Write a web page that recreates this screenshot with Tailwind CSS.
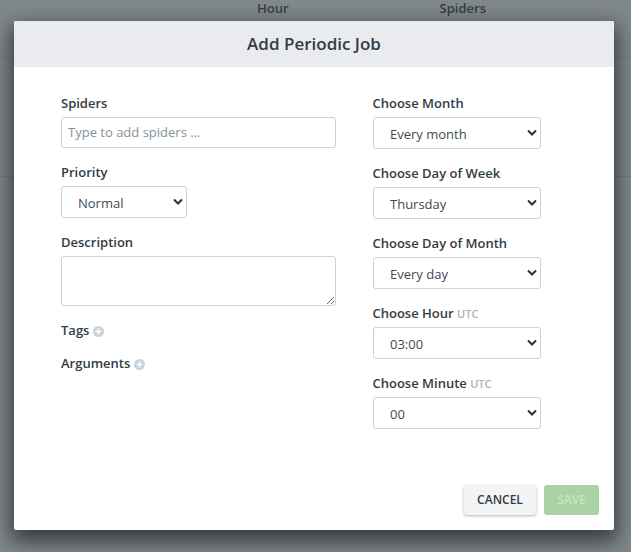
<!DOCTYPE html>
<html lang="en">
<head>
    <meta charset="UTF-8">
    <meta name="viewport" content="width=device-width, initial-scale=1.0">
    <title>Add Periodic Job</title>
    <script src="https://cdn.jsdelivr.net/npm/@tailwindcss/browser@4"></script>
</head>
<body class="relative h-[552px] w-[631px] overflow-hidden bg-[#81888c] font-['Open_Sans',sans-serif] text-[#323c44]">
    <!-- table behind the overlay -->
    <div class="h-[58px] border-b border-[#767d80] flex text-[13px] font-semibold text-[#363e43] leading-[16px]">
        <span class="ml-[257px]">Hour</span>
        <span class="ml-[151px]">Spiders</span>
    </div>
    <div class="h-[119px] border-b border-[#767d80]"></div>

    <!-- modal -->
    <div class="absolute left-[14px] top-[21px] w-[600px] h-[509px] flex flex-col bg-white rounded-[2px] overflow-hidden shadow-[0_8px_20px_4px_rgba(0,0,0,0.55)]">
        <div class="h-[46px] shrink-0 bg-[#eaebef] flex items-center justify-center text-[17px] font-semibold text-[#323c44]">Add Periodic Job</div>

        <div class="flex pl-[47px] pt-[26px]">
            <div class="w-[275px] flex flex-col gap-[14px]">
                <div>
                    <label class="block h-[20px] mb-[4px] text-[13px] font-semibold leading-[20px]">Spiders</label>
                    <input type="text" placeholder="Type to add spiders ..." class="block w-full h-[31px] px-[6px] pb-[1px] border border-[#cbd3d9] rounded-[3px] text-[13px] outline-none placeholder:text-[#84929c]">
                </div>
                <div>
                    <label class="block h-[20px] mb-[4px] text-[13px] font-semibold leading-[20px]">Priority</label>
                    <div class="relative w-[126px]">
                        <select class="block appearance-none w-full h-[32px] pl-[16px] pt-[3px] border border-[#cbd3d9] rounded-[3px] bg-white text-[13px] text-[#3f4a52] outline-none">
                            <option>Normal</option>
                        </select>
                        <svg class="absolute right-[4px] top-[12px] w-[10px] h-[8px]" viewBox="0 0 10 8" fill="none" stroke="#2b3238" stroke-width="2"><path d="M1 1.5 5 5.5 9 1.5"/></svg>
                    </div>
                </div>
                <div>
                    <label class="block h-[20px] mb-[4px] text-[13px] font-semibold leading-[20px]">Description</label>
                    <textarea class="block w-full h-[50px] border border-[#cbd3d9] rounded-[3px] outline-none"></textarea>
                </div>
                <div class="flex items-center h-[20px] mt-px text-[13px] font-semibold">
                    Tags
                    <svg class="ml-[4px] mt-[1px] w-[11px] h-[11px]" viewBox="0 0 11 11"><circle cx="5.5" cy="5.5" r="5.5" fill="#c9d3da"/><path d="M5.5 2.5v6M2.5 5.5h6" stroke="#fff" stroke-width="1.6"/></svg>
                </div>
                <div class="flex items-center h-[20px] -mt-px text-[13px] font-semibold">
                    Arguments
                    <svg class="ml-[4px] mt-[1px] w-[11px] h-[11px]" viewBox="0 0 11 11"><circle cx="5.5" cy="5.5" r="5.5" fill="#c9d3da"/><path d="M5.5 2.5v6M2.5 5.5h6" stroke="#fff" stroke-width="1.6"/></svg>
                </div>
            </div>

            <div class="ml-[36.5px] w-[168.5px] flex flex-col gap-[14px]">
                <div>
                    <label class="block h-[20px] mb-[4px] text-[13px] font-semibold leading-[20px]">Choose Month</label>
                    <div class="relative">
                        <select class="block appearance-none w-full h-[32px] pl-[16.5px] pt-[3px] border border-[#cbd3d9] rounded-[3px] bg-white text-[13px] text-[#3f4a52] outline-none">
                            <option>Every month</option>
                        </select>
                        <svg class="absolute right-[4px] top-[12px] w-[10px] h-[8px]" viewBox="0 0 10 8" fill="none" stroke="#2b3238" stroke-width="2"><path d="M1 1.5 5 5.5 9 1.5"/></svg>
                    </div>
                </div>
                <div>
                    <label class="block h-[20px] mb-[4px] text-[13px] font-semibold leading-[20px]">Choose Day of Week</label>
                    <div class="relative">
                        <select class="block appearance-none w-full h-[32px] pl-[16.5px] pt-[3px] border border-[#cbd3d9] rounded-[3px] bg-white text-[13px] text-[#3f4a52] outline-none">
                            <option>Thursday</option>
                        </select>
                        <svg class="absolute right-[4px] top-[12px] w-[10px] h-[8px]" viewBox="0 0 10 8" fill="none" stroke="#2b3238" stroke-width="2"><path d="M1 1.5 5 5.5 9 1.5"/></svg>
                    </div>
                </div>
                <div>
                    <label class="block h-[20px] mb-[4px] text-[13px] font-semibold leading-[20px]">Choose Day of Month</label>
                    <div class="relative">
                        <select class="block appearance-none w-full h-[32px] pl-[16.5px] pt-[3px] border border-[#cbd3d9] rounded-[3px] bg-white text-[13px] text-[#3f4a52] outline-none">
                            <option>Every day</option>
                        </select>
                        <svg class="absolute right-[4px] top-[12px] w-[10px] h-[8px]" viewBox="0 0 10 8" fill="none" stroke="#2b3238" stroke-width="2"><path d="M1 1.5 5 5.5 9 1.5"/></svg>
                    </div>
                </div>
                <div>
                    <label class="block h-[20px] mb-[4px] text-[13px] font-semibold leading-[20px]">Choose Hour <span class="text-[11px] text-[#a9b3ba]">UTC</span></label>
                    <div class="relative">
                        <select class="block appearance-none w-full h-[32px] pl-[16.5px] pt-[3px] border border-[#cbd3d9] rounded-[3px] bg-white text-[13px] text-[#3f4a52] outline-none">
                            <option>03:00</option>
                        </select>
                        <svg class="absolute right-[4px] top-[12px] w-[10px] h-[8px]" viewBox="0 0 10 8" fill="none" stroke="#2b3238" stroke-width="2"><path d="M1 1.5 5 5.5 9 1.5"/></svg>
                    </div>
                </div>
                <div>
                    <label class="block h-[20px] mb-[4px] text-[13px] font-semibold leading-[20px]">Choose Minute <span class="text-[11px] text-[#a9b3ba]">UTC</span></label>
                    <div class="relative">
                        <select class="block appearance-none w-full h-[32px] pl-[16.5px] pt-[3px] border border-[#cbd3d9] rounded-[3px] bg-white text-[13px] text-[#3f4a52] outline-none">
                            <option>00</option>
                        </select>
                        <svg class="absolute right-[4px] top-[12px] w-[10px] h-[8px]" viewBox="0 0 10 8" fill="none" stroke="#2b3238" stroke-width="2"><path d="M1 1.5 5 5.5 9 1.5"/></svg>
                    </div>
                </div>
            </div>
        </div>

        <div class="mt-auto flex justify-end gap-[8px] pr-[15px] pb-[15px]">
            <button class="w-[72px] h-[30px] rounded-[3px] bg-[#f3f4f6] text-[12px] font-semibold shadow-[0_1px_3px_rgba(0,0,0,0.3)]">CANCEL</button>
            <button class="w-[55px] h-[30px] rounded-[3px] bg-[#a9d3a5] text-[12px] font-semibold text-[#c9e3c6]">SAVE</button>
        </div>
    </div>
</body>
</html>
